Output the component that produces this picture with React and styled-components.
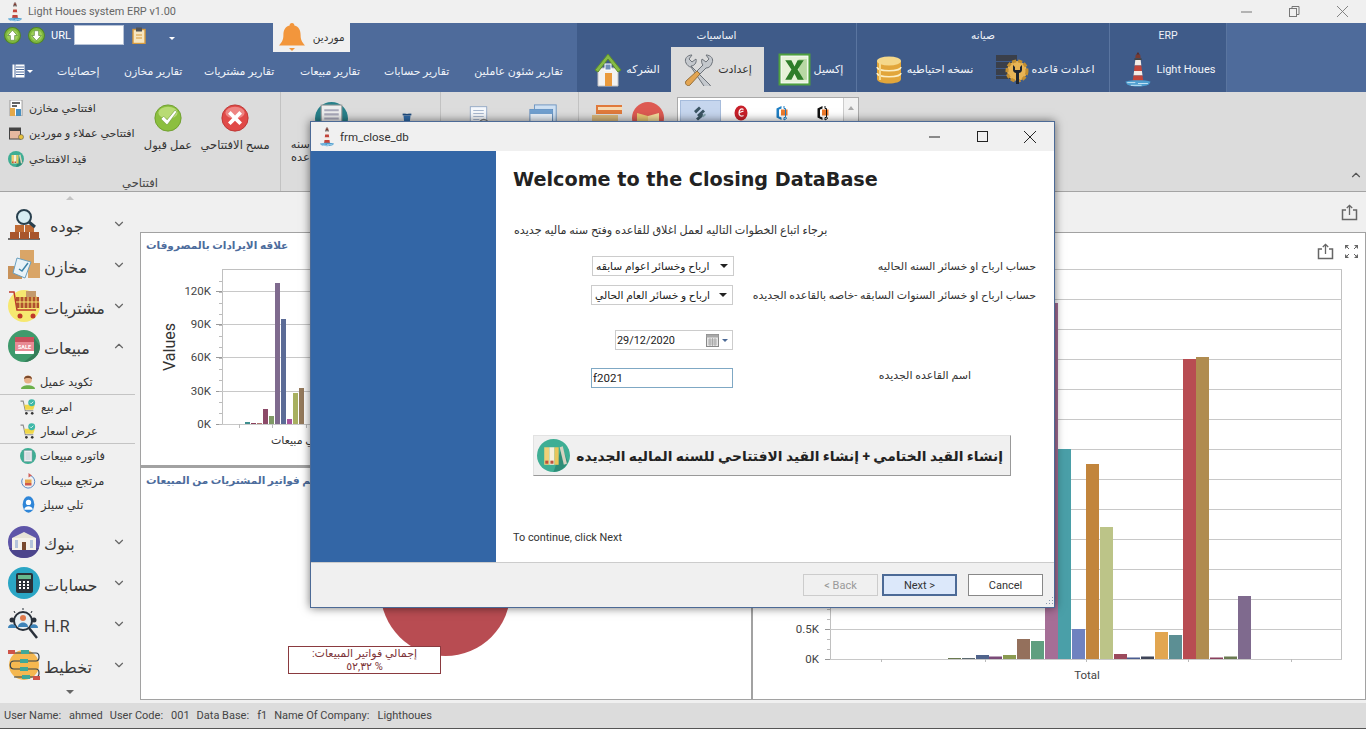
import React from "react";
import styled, { createGlobalStyle } from "styled-components";
import { ChevronDown, ChevronUp } from "lucide-react";

const GlobalStyle = createGlobalStyle`
  html, body { margin: 0; padding: 0; background: #f0f0f0; }
  * { box-sizing: border-box; }
  body { font-family: Roboto, "DejaVu Sans", sans-serif; }
`;

const Page = styled.div`
  position: relative;
  width: 1366px;
  height: 729px;
  overflow: hidden;
  display: flex;
  flex-direction: column;
  background: #f0f0f0;
`;

/* ---------- title bar ---------- */
const TitleBar = styled.div`
  height: 23px;
  display: flex;
  align-items: center;
  padding-left: 8px;
  gap: 6px;
  background: #f0f0f0;
`;
const AppName = styled.span`
  font-size: 10.9px;
  color: #666;
  flex: 1;
`;
const WinControls = styled.div`
  display: flex;
  align-items: center;
  color: ${p => p.$color || "#777"};
  width: 143px;
  justify-content: space-between;
  padding: 0 18px;
`;

/* ---------- blue header ---------- */
const Header = styled.div`
  height: 69px;
  display: flex;
  background: #4e6b9b;
  color: #fff;
`;
const HeaderLeft = styled.div`
  width: 577px;
  display: flex;
  flex-direction: column;
`;
const QuickBar = styled.div`
  height: 35px;
  display: flex;
  align-items: flex-start;
  padding-left: 4px;
`;
const QuickBall = styled.div`
  width: 17px;
  height: 17px;
  margin: 4px 7px 0 0;
`;
const UrlLabel = styled.span`
  font-size: 11px;
  margin: 6px 3px 0 -1px;
`;
const UrlInput = styled.input`
  width: 50px;
  height: 20px;
  margin-top: 2px;
  border: 1px solid #b8c4d8;
  background: #fff;
  outline: none;
`;
const QuickClip = styled.div`
  margin: 4px 0 0 8px;
  width: 14px;
  height: 16px;
`;
const Caret = styled.span`
  width: 0;
  height: 0;
  border-left: 3px solid transparent;
  border-right: 3px solid transparent;
  border-top: 3px solid ${p => p.$color || "#fff"};
  margin: ${p => p.$margin || "0"};
`;
const BellBox = styled.div`
  width: 77px;
  height: 29px;
  margin-left: 98px;
  background: #f0f0f0;
  color: #333;
  display: flex;
  align-items: center;
  gap: 8px;
  padding-left: 6px;
  font-size: 10.5px;
`;
const TabsRow = styled.div`
  height: 34px;
  display: flex;
  align-items: center;
  padding: 0 0 8px 12px;
`;
const MenuGlyph = styled.div`
  display: flex;
  align-items: center;
  gap: 2px;
  flex: none;
  margin-right: ${p => p.$gap}px;
`;
const TopTab = styled.span`
  flex: none;
  font-size: 10.9px;
  white-space: nowrap;
  color: #f2f5fa;
  width: ${p => p.$w}px;
  margin-right: 26px;
  text-align: center;
`;
const TabGroup = styled.div`
  width: ${p => p.$w}px;
  background: #3f5b89;
  border-right: 1px solid #5a75a0;
  display: flex;
  flex-direction: column;
`;
const TabGroupTitle = styled.div`
  height: 24px;
  display: flex;
  align-items: center;
  justify-content: center;
  font-size: 10.5px;
  color: #eef2f8;
`;
const TabItems = styled.div`
  flex: 1;
  display: flex;
  padding-left: ${p => p.$pad || 0}px;
`;
const TabItem = styled.div`
  flex: none;
  width: ${p => p.$w}px;
  display: flex;
  align-items: center;
  justify-content: center;
  gap: ${p => p.$gap ?? 3}px;
  font-size: 11px;
  white-space: nowrap;
  background: ${p => (p.$active ? "#dcdcdc" : "transparent")};
  color: ${p => (p.$active ? "#333" : "#f2f5fa")};
`;

/* ---------- ribbon ---------- */
const Ribbon = styled.div`
  height: 100px;
  background: #dcdcdc;
  border-bottom: 1px solid #a4a4a4;
  display: flex;
  position: relative;
`;
const RibbonGroup = styled.div`
  width: ${p => p.$w}px;
  border-right: ${p => (p.$plain ? "none" : "1px solid #c2c2c2")};
  display: flex;
  flex-direction: column;
`;
const RibbonBody = styled.div`
  height: 84px;
  display: flex;
  padding-left: ${p => p.$pad || 0}px;
`;
const RibbonLabel = styled.div`
  text-align: center;
  font-size: 11.5px;
  color: #444;
`;
const SmallList = styled.div`
  width: 134px;
  padding: 7px 0 0 8px;
  display: flex;
  flex-direction: column;
  gap: 7.5px;
`;
const SmallItem = styled.div`
  height: 18px;
  display: flex;
  align-items: center;
  gap: 5px;
  font-size: 11px;
  color: #333;
  white-space: nowrap;
`;
const LargeBtn = styled.div`
  flex: none;
  width: ${p => p.$w}px;
  padding-top: ${p => p.$top ?? 12}px;
  display: flex;
  flex-direction: column;
  align-items: center;
  gap: ${p => p.$gap ?? 7}px;
  font-size: 11.5px;
  line-height: 13px;
  color: #333;
  white-space: nowrap;
  text-align: center;
`;
const LargeBtnCut = styled.span`
  align-self: flex-start;
  width: 21px;
  text-align: right;
`;
const Gallery = styled.div`
  width: 182px;
  height: 62px;
  margin: 5px 0 0 6px;
  background: #fff;
  border: 1px solid #aaa;
  display: flex;
  padding: 2px 0 0 2px;
`;
const GalleryTile = styled.div`
  width: 41px;
  height: 30px;
  display: flex;
  justify-content: center;
  padding-top: 4px;
  background: ${p => (p.$on ? "#c6d6ee" : "transparent")};
  border: 1px solid ${p => (p.$on ? "#a6bcdc" : "transparent")};
`;
const GalleryScroll = styled.div`
  width: 15px;
  margin-left: auto;
  margin-top: -2px;
  height: 60px;
  background: #f2f2f2;
  border-left: 1px solid #ccc;
  display: flex;
  justify-content: center;
  padding-top: 8px;
`;
const GalleryArrow = styled.span`
  width: 0;
  height: 0;
  border-left: 3px solid transparent;
  border-right: 3px solid transparent;
  border-bottom: 4px solid #aaa;
`;
const RibbonCollapse = styled.div`
  position: absolute;
  right: 3px;
  bottom: 5px;
  color: #555;
`;

/* ---------- work area ---------- */
const Work = styled.div`
  height: 511px;
  display: flex;
`;
const Sidebar = styled.nav`
  width: 140px;
  display: flex;
  flex-direction: column;
  background: #f0f0f0;
`;
const ScrollMark = styled.div`
  height: ${p => p.$h}px;
  display: flex;
  justify-content: center;
  align-items: center;
`;
const ScrollArrow = styled.span`
  width: 0;
  height: 0;
  border-left: 4px solid transparent;
  border-right: 4px solid transparent;
  ${p => (p.$down ? "border-top: 4px solid #666;" : "border-bottom: 4px solid #c4c4c4;")}
`;
const NavRow = styled.div`
  height: 40.7px;
  display: flex;
  align-items: center;
  padding-left: 8px;
  color: #3a3a3a;
`;
const NavIconBox = styled.div`
  width: 32px;
  height: 32px;
  flex: none;
`;
const NavText = styled.span`
  width: 72px;
  padding: 5px 0 0 ${p => p.$indent || 4}px;
  white-space: nowrap;
  font-size: 16px;
`;
const NavChevron = styled.div`
  color: #666;
  display: flex;
`;
const SubList = styled.div`
  display: flex;
  flex-direction: column;
  padding-top: 4px;
  margin-bottom: 5px;
`;
const SubRow = styled.div`
  height: 24.4px;
  display: flex;
  align-items: center;
  gap: 4px;
  padding-left: 20px;
  width: 135px;
  font-size: 11.4px;
  color: #333;
  border-bottom: ${p => (p.$line ? "1px solid #c4c4c4" : "none")};
`;

const Content = styled.div`
  flex: 1;
  display: flex;
  flex-direction: column;
`;
const TopStrip = styled.div`
  height: 40px;
  display: flex;
  justify-content: flex-end;
  align-items: center;
  padding-right: 8px;
`;
const Panels = styled.div`
  height: 468px;
  display: flex;
`;
const LeftStack = styled.div`
  width: 612px;
  display: flex;
  flex-direction: column;
`;
const Panel = styled.section`
  position: relative;
  flex: ${p => p.$flex || 1};
  height: ${p => (p.$h ? p.$h + "px" : "auto")};
  background: #fff;
  border: 1px solid #a2a2a2;
  border-top-width: ${p => p.$tw || 1}px;
  overflow: hidden;
`;
const ChartTitle = styled.h3`
  height: 26px;
  margin: 0;
  padding: 5px 0 0 5px;
  font-size: 10.5px;
  font-weight: 700;
  line-height: 16px;
  color: #4d6c9c;
  white-space: nowrap;
`;
const PanelTools = styled.div`
  height: 36px;
  display: flex;
  justify-content: flex-end;
  align-items: center;
  gap: 10px;
  padding-right: 6px;
`;
const ChartSvg = styled.svg`
  display: block;
`;
const PieTip = styled.div`
  position: absolute;
  left: 147px;
  top: 178px;
  width: 153px;
  height: 28px;
  border: 1px solid #8a3a3f;
  background: #fff;
  color: #7d3438;
  font-size: 11px;
  line-height: 13px;
  text-align: center;
`;
const TipLine = styled.div`
  direction: ${p => p.$dir};
`;

const StatusBar = styled.footer`
  height: 26px;
  background: #dcdcdc;
  border-bottom: 1px solid #555;
  display: flex;
  align-items: center;
  padding-left: 4px;
  gap: 7px;
  font-size: 11px;
  color: #444;
  white-space: nowrap;
`;
const StatusPair = styled.span`
  display: inline-flex;
  gap: 8px;
`;

/* ---------- dialog ---------- */
const Dialog = styled.div`
  position: absolute;
  left: 310px;
  top: 121px;
  width: 745px;
  height: 487px;
  display: flex;
  flex-direction: column;
  background: #fff;
  border: 1px solid #4c6a96;
  box-shadow: 0 0 9px rgba(0, 0, 0, 0.55);
`;
const DialogTitle = styled.div`
  height: 29px;
  flex: none;
  background: #f0f0f0;
  display: flex;
  align-items: center;
  padding-left: 9px;
  gap: 6px;
  font-size: 11.5px;
  color: #333;
`;
const DialogName = styled.span`
  flex: 1;
`;
const DialogBody = styled.div`
  flex: 1;
  display: flex;
`;
const BlueSide = styled.div`
  width: 185px;
  background: #3366a6;
`;
const WizardPage = styled.div`
  flex: 1;
  display: flex;
  flex-direction: column;
  background: #fff;
`;
const WizardHeading = styled.h1`
  margin: 16px 0 0 17px;
  font-family: "DejaVu Sans", sans-serif;
  font-size: 19.2px;
  line-height: 26px;
  font-weight: 700;
  color: #222;
  white-space: nowrap;
`;
const Intro = styled.p`
  margin: 30px 0 0 18px;
  height: 16px;
  font-size: 11.2px;
  line-height: 16px;
  color: #333;
  white-space: nowrap;
`;
const FormRow = styled.div`
  display: flex;
  align-items: center;
  height: 20px;
  margin-top: ${p => p.$top}px;
  padding-left: ${p => p.$pad || 95}px;
`;
const FormLabel = styled.label`
  flex: 1;
  text-align: right;
  padding-right: ${p => p.$right || 18}px;
  padding-bottom: ${p => p.$lift || 0}px;
  font-size: 11px;
  color: #333;
  white-space: nowrap;
`;
const FakeSelect = styled.div`
  width: 142px;
  height: 20px;
  border: 1px solid #ccc;
  background: #fff;
  display: flex;
  align-items: center;
  justify-content: space-between;
  padding: 0 5px 0 3px;
  font-size: 10.7px;
  color: #222;
  white-space: nowrap;
  overflow: hidden;
`;
const SelectCaret = styled.span`
  flex: none;
  width: 0;
  height: 0;
  border-left: 4px solid transparent;
  border-right: 4px solid transparent;
  border-top: 4px solid #222;
`;
const DateField = styled.div`
  width: 118px;
  height: 20px;
  margin-left: 24px;
  border: 1px solid #ccc;
  display: flex;
  align-items: center;
  padding: 0 4px 0 1px;
  font-size: 10.9px;
  color: #222;
`;
const DateText = styled.span`
  flex: 1;
`;
const NameInput = styled.input`
  width: 142px;
  height: 20px;
  border: 1px solid #7fa8c4;
  padding: 0 1px;
  outline: none;
  font-family: Roboto, sans-serif;
  font-size: 11.5px;
  color: #222;
`;
const ActionBtn = styled.button`
  margin: 47px 0 0 37px;
  width: 478px;
  height: 41px;
  display: flex;
  align-items: center;
  justify-content: space-between;
  padding: 0 7px 0 3px;
  background: #f0f0f0;
  border: 1px solid #e2e2e2;
  border-right-color: #999;
  border-bottom-color: #999;
  font-family: Roboto, "DejaVu Sans", sans-serif;
  font-size: 13.8px;
  font-weight: 700;
  color: #222;
  white-space: nowrap;
`;
const NextHint = styled.div`
  margin: 54px 0 0 17px;
  font-size: 10.9px;
  line-height: 16px;
  color: #333;
`;
const DialogFooter = styled.div`
  height: 45px;
  flex: none;
  position: relative;
  background: #f0f0f0;
  border-top: 1px solid #ccc;
  display: flex;
  justify-content: flex-end;
  align-items: flex-start;
  padding: 11px 11px 0 0;
`;
const WizBtn = styled.button`
  width: 75px;
  height: 22px;
  margin-left: ${p => p.$gap || 0}px;
  padding: 0;
  font-family: Roboto, sans-serif;
  font-size: 11px;
  background: ${p => (p.$primary ? "#dce8fa" : p.$off ? "#f0f0f0" : "#fff")};
  color: ${p => (p.$off ? "#999" : "#333")};
  border: ${p => (p.$primary ? "2px solid #4c6a96" : p.$off ? "1px solid #ccc" : "1px solid #888")};
`;
const Grip = styled.svg`
  position: absolute;
  right: 0;
  bottom: 0;
`;

/* ---------- drawings ---------- */
const Svg = ({ s = 32, w, h, vb = "0 0 32 32", children }) => (
  <svg width={w || s} height={h || s} viewBox={vb} xmlns="http://www.w3.org/2000/svg" style={{ display: "block", flex: "none" }}>
    {children}
  </svg>
);

const Lighthouse = ({ w = 14, h = 20 }) => (
  <Svg w={w} h={h} vb="0 0 28 40">
    <path d="M14 0l2 3h-4z" fill="#5c2a24" />
    <path d="M11.500 3h5l.5 4h-6z" fill="#7a3a30" />
    <path d="M10 7h8v2h-8z" fill="#444" />
    <path d="M11 9h6l.7 6h-7.400z" fill="#f4ece6" />
    <path d="M10.300 15h7.400l.7 6h-8.800z" fill="#c2453b" />
    <path d="M9.600 21h8.800l.6 5H9z" fill="#f4ece6" />
    <path d="M9 26h10l.8 6H8.200z" fill="#c2453b" />
    <path d="M0 33c6-2 22-2 28 0l-2 3c-6 3-18 3-24 0z" fill="#4f9fd0" />
    <path d="M2 34h9M14 35h11M6 37h12" stroke="#cfeaf8" strokeWidth="1" />
  </Svg>
);
const ArrowBall = ({ down }) => (
  <Svg s={17}>
    <circle cx="16" cy="16" r="15" fill="#7fb83e" stroke="#4f8526" strokeWidth="2" />
    <circle cx="16" cy="16" r="10.500" fill="#9ed05a" />
    <path d={down ? "M16 26 7 16h5V7h8v9h5z" : "M16 6l9 10h-5v9h-8v-9H7z"} fill="#fff" stroke="#3d6c1e" strokeWidth="1" />
  </Svg>
);
const ClipIcon = () => (
  <Svg w={14} h={17} vb="0 0 14 17">
    <rect x="1" y="2.500" width="12" height="14" fill="#f7e6c0" stroke="#d89a3c" strokeWidth="1.400" />
    <rect x="4" y="0.500" width="6" height="4" fill="#555" />
    <path d="M4 8h6M4 11h6" stroke="#d89a3c" />
  </Svg>
);
const BellIcon = () => (
  <Svg w={26} h={29} vb="0 0 26 29">
    <path d="M13 0c1.600 0 2.400 1.200 2.400 2.600 4.600 1.200 6.200 5 6.200 9.400 0 5 1.400 7 4.400 10.400H0C3 19 4.400 17 4.400 12c0-4.400 1.600-8.200 6.200-9.400C10.600 1.200 11.400 0 13 0z" fill="#f2963c" />
    <path d="M10 25h6l-3 3z" fill="#f2963c" />
  </Svg>
);
const HamburgerIcon = () => (
  <Svg w={13} h={14} vb="0 0 13 14">
    <rect x="0.500" y="0.500" width="12" height="13" fill="#fff" />
    <path d="M4 3h8M4 5.500h8M4 8h8M4 10.500h8" stroke="#4e6b9b" />
    <path d="M3 0v14" stroke="#4e6b9b" />
  </Svg>
);
const HomeIcon = () => (
  <Svg w={30} h={34} vb="0 0 30 34">
    <path d="M5 15h20v18H5z" fill="#f2f2f2" stroke="#c4c4c4" />
    <path d="M15 1 2 17l3 2L15 6l10 13 3-2z" fill="#86bb45" stroke="#5d8c2a" />
    <rect x="12" y="20" width="7" height="13" fill="#ea9a3c" />
    <rect x="12" y="11" width="6" height="6" fill="#6f8fb8" stroke="#fff" />
  </Svg>
);
const ToolsIcon = () => (
  <Svg w={32} h={32}>
    <path d="M3 9c-2-4 1-8 6-8l-3 4 3 3 4-3c1 4-2 7-5 7l19 19c2 3-2 6-4 4L8 13C6 13 4 11 3 9z" fill="#c4c8cd" stroke="#6d737a" />
    <path d="M29 9c2-4-1-8-6-8l3 4-3 3-4-3c-1 3 0 5 1 6L14 17l3 3 6-6c3 0 5-2 6-5z" fill="#c4c8cd" stroke="#6d737a" />
    <path d="M14 17 3 27c-2 3 2 6 4 4l10-11z" fill="#e3a552" stroke="#96703a" />
  </Svg>
);
const ExcelIcon = () => (
  <Svg w={33} h={33}>
    <rect x="0.500" y="0.500" width="31" height="31" fill="#4fa03f" />
    <rect x="3" y="3" width="26" height="26" fill="#e6f2d8" stroke="#fff" />
    <path d="M20 6h8v20h-8z" fill="#b8d8a4" />
    <path d="M7 7h6l3 6 3-6h6l-6 9 6 10h-6l-3-6-3 6H7l6-10z" fill="#2e7d2a" />
  </Svg>
);
const DbIcon = () => (
  <Svg w={26} h={28} vb="0 0 26 28">
    <path d="M1 5v18c0 6 24 6 24 0V5z" fill="#e2a63a" />
    <ellipse cx="13" cy="5" rx="12" ry="4.500" fill="#f5d88a" />
    <path d="M1 11c0 5 24 5 24 0M1 17c0 5 24 5 24 0" stroke="#fbeec4" strokeWidth="1.500" fill="none" />
    <path d="M4 6v18" stroke="#f7d98c" strokeWidth="2" />
  </Svg>
);
const ServerGearIcon = () => (
  <Svg w={34} h={32} vb="0 0 34 32">
    <rect x="0" y="1" width="21" height="6" fill="#3a3f4a" />
    <rect x="0" y="8" width="21" height="6" fill="#3a3f4a" />
    <rect x="0" y="15" width="21" height="6" fill="#3a3f4a" />
    <rect x="0" y="22" width="17" height="3" fill="#3a3f4a" />
    <circle cx="21" cy="17" r="10" fill="#e8b455" stroke="#c48f30" strokeWidth="3" strokeDasharray="4 2" />
    <path d="M17 11v5c0 2 2 3 3 3v11h3V19c1 0 3-1 3-3v-5l-2 2v3h-5v-3z" fill="#1f2530" />
  </Svg>
);
const OkBall = () => (
  <Svg s={28}>
    <circle cx="16" cy="16" r="15" fill="#8cbf3f" stroke="#6c9c2a" />
    <ellipse cx="16" cy="10" rx="11" ry="7" fill="#b8db74" />
    <path d="M8 17l3-3 4 4 9-11 2 2-11 15z" fill="#fff" stroke="#5d8c2a" strokeWidth=".6" />
  </Svg>
);
const CancelBall = () => (
  <Svg s={28}>
    <circle cx="16" cy="16" r="15" fill="#e04a48" stroke="#b93230" />
    <ellipse cx="16" cy="10" rx="11" ry="7" fill="#ee8583" />
    <path d="M11 8l5 5 5-5 3 3-5 5 5 5-3 3-5-5-5 5-3-3 5-5-5-5z" fill="#fff" />
  </Svg>
);
const StoreDoc = () => (
  <Svg s={16}>
    <rect x="4" y="0" width="24" height="32" fill="#fff" stroke="#555" />
    <path d="M8 6h16M8 12h10" stroke="#333" strokeWidth="3" />
    <rect x="4" y="16" width="10" height="16" fill="#e4a94a" />
    <rect x="16" y="18" width="10" height="14" fill="#4a90c0" />
  </Svg>
);
const ClientsIcon = () => (
  <Svg s={16}>
    <rect x="3" y="4" width="22" height="22" fill="#e6b9a0" stroke="#444" strokeWidth="2" />
    <rect x="3" y="4" width="22" height="6" fill="#444" />
    <circle cx="26" cy="22" r="5" fill="#e8c23c" stroke="#444" />
  </Svg>
);
const BooksBall = ({ s = 16 }) => (
  <Svg s={s}>
    <circle cx="16" cy="16" r="16" fill="#3fae94" />
    <path d="M16 32 24 8l6 14a16 16 0 0 1-14 10z" fill="#2f8d78" />
    <rect x="7" y="8" width="5" height="17" fill="#f0d078" />
    <rect x="12" y="8" width="5" height="17" fill="#f7f0dc" />
    <rect x="17" y="8" width="4" height="17" fill="#e9c65a" />
    <path d="M22 8l3-1 4 17-3 1z" fill="#d7d2c0" />
    <rect x="8" y="21" width="3" height="3" fill="#c0503c" />
    <rect x="13" y="21" width="3" height="3" fill="#c0503c" />
  </Svg>
);
const ScreenBall = () => (
  <Svg s={33}>
    <circle cx="16" cy="16" r="16" fill="#27808a" />
    <rect x="6" y="3" width="20" height="22" fill="#eee" stroke="#999" />
    <path d="M9 8h14M9 12h14M9 16h14" stroke="#aab" strokeWidth="2" />
  </Svg>
);
const TrashIcon = () => (
  <Svg s={14}>
    <path d="M8 10h16l-2 20H10z" fill="#2f6aa8" />
    <rect x="6" y="6" width="20" height="4" fill="#1e4a7c" />
    <path d="M13 3h6v3h-6z" fill="#e0e0e0" />
  </Svg>
);
const DocSearch = () => (
  <Svg w={24} h={30}>
    <rect x="3" y="1" width="22" height="26" fill="#f6f9fd" stroke="#7f99bd" />
    <path d="M7 6h14M7 10h14M7 14h14M7 18h8" stroke="#8ea2bf" />
    <circle cx="21" cy="24" r="6" fill="none" stroke="#7d7d7d" strokeWidth="2" />
  </Svg>
);
const WindowsIcon = () => (
  <Svg s={29}>
    <rect x="6" y="1" width="24" height="20" fill="#cfe0f2" stroke="#6b93bf" />
    <rect x="1" y="6" width="25" height="20" fill="#eaf2fa" stroke="#5d88b8" />
    <rect x="1" y="6" width="25" height="5" fill="#6f9fcf" />
    <circle cx="20" cy="29" r="8" fill="#a98a5e" />
  </Svg>
);
const BookStack = () => (
  <Svg s={32}>
    <rect x="5" y="2" width="26" height="9" fill="#e07a3c" />
    <rect x="7" y="4" width="24" height="3" fill="#f7dcb4" />
    <rect x="1" y="12" width="26" height="8" fill="#d8b87c" />
    <rect x="1" y="21" width="28" height="9" fill="#3f8fa0" />
  </Svg>
);
const RedBook = () => (
  <Svg s={32}>
    <circle cx="16" cy="16" r="16" fill="#dd5a52" />
    <path d="M5 11l11 3v14L5 24z" fill="#e9c873" />
    <path d="M27 11l-11 3v14l11-4z" fill="#f4dc9c" />
  </Svg>
);
const GalleryA = () => (
  <Svg s={16}>
    <path d="M4 12 14 3l4 4L8 17zM10 20 22 9l4 4-12 11zM8 27l12-10 4 4-12 10z" fill="#3b5564" />
    <path d="M20 22l6-5 2 3-6 5z" fill="#85a8b0" />
  </Svg>
);
const GalleryB = () => (
  <Svg s={16}>
    <ellipse cx="16" cy="16" rx="13" ry="15" fill="#c8202a" />
    <path d="M21 9c-5-3-9 1-9 7 0 5 4 8 9 5M13 15l8-3" stroke="#fff" strokeWidth="2.500" fill="none" />
  </Svg>
);
const GalleryC = ({ c }) => (
  <Svg s={16}>
    <path d="M15 2 5 7v18l10 5V25l-5-2V9l5-2z" fill={c} />
    <rect x="14" y="9" width="13" height="12" fill="#ee7a2c" />
    <path d="M20 2v5h3v18h-3v5l5-3v-2" stroke={c} strokeWidth="2" fill="none" />
  </Svg>
);

const QualityIcon = () => (
  <Svg>
    <path d="M0 31h32" stroke="#444" strokeWidth="1.500" />
    <rect x="2" y="24" width="9" height="7" fill="#a8552c" />
    <rect x="12" y="24" width="9" height="7" fill="#a8552c" />
    <rect x="22" y="24" width="9" height="7" fill="#a8552c" />
    <rect x="7" y="17" width="9" height="7" fill="#bf6a34" />
    <rect x="17" y="17" width="9" height="7" fill="#bf6a34" />
    <circle cx="16" cy="9" r="7" fill="#d8eef4" stroke="#29404e" strokeWidth="2" />
    <path d="M21 14l6 5" stroke="#29404e" strokeWidth="3" />
  </Svg>
);
const StoreIcon = () => (
  <Svg>
    <rect x="12" y="1" width="14" height="13" fill="#d9a567" />
    <rect x="0" y="17" width="14" height="13" fill="#c8925a" />
    <rect x="20" y="14" width="12" height="15" fill="#d9a567" />
    <path d="M9 9l14 4-6 16-12-5z" fill="#e9f3f8" stroke="#6aa0c0" />
    <path d="M11 20l3 2 6-8" stroke="#3d83a8" strokeWidth="1.500" fill="none" />
  </Svg>
);
const CartIcon = () => (
  <Svg>
    <circle cx="16" cy="16" r="16" fill="#f6e870" />
    <path d="M1 2h5l3 18h19" stroke="#c0392b" strokeWidth="1.500" fill="none" />
    <rect x="8" y="7" width="23" height="11" fill="#b0512e" />
    <path d="M12 7v11M16 7v11M20 7v11M24 7v11M28 7v11M8 12h23" stroke="#f6e870" />
    <rect x="18" y="1" width="10" height="6" fill="#c49a6c" />
    <circle cx="12" cy="26" r="2.500" fill="#c0392b" />
    <circle cx="25" cy="26" r="2.500" fill="#c0392b" />
  </Svg>
);
const SaleIcon = () => (
  <Svg>
    <circle cx="16" cy="16" r="16" fill="#3f9a6c" />
    <path d="M16 32 26 24V8l6 8a16 16 0 0 1-16 16z" fill="#357f5a" />
    <rect x="7" y="7" width="19" height="17" rx="1" fill="#fff" />
    <rect x="7" y="7" width="19" height="5" fill="#c8505c" />
    <rect x="7" y="12" width="19" height="9" fill="#e88a94" />
    <text x="16.500" y="19" fontSize="5.500" fontWeight="700" textAnchor="middle" fill="#fff">SALE</text>
  </Svg>
);
const BankIcon = () => (
  <Svg>
    <circle cx="16" cy="16" r="16" fill="#5e55a8" />
    <path d="M16 32C8 32 3 28 1 22h30c-2 6-7 10-15 10z" fill="#4c458c" />
    <path d="M4 12l12-6 12 6z" fill="#e8e4d8" />
    <rect x="4" y="12" width="24" height="12" fill="#f5f2ea" />
    <rect x="14" y="16" width="4" height="8" fill="#7a4a2c" />
    <path d="M7 14h3v8H7zM22 14h3v8h-3z" fill="#b5c4dc" />
  </Svg>
);
const CalcIcon = () => (
  <Svg>
    <circle cx="16" cy="16" r="16" fill="#2aa5c4" />
    <rect x="8" y="6" width="17" height="20" rx="2" fill="#2a3038" />
    <rect x="10" y="8" width="13" height="4" fill="#68b88e" />
    <path d="M11 15h2M15 15h2M19 15h2M11 18h2M15 18h2M19 18h2M11 21h2M15 21h2M19 21h2" stroke="#fff" strokeWidth="1.800" />
  </Svg>
);
const HrIcon = () => (
  <Svg>
    <circle cx="15" cy="13" r="9" fill="#e6eef2" stroke="#29303a" strokeWidth="2" />
    <circle cx="15" cy="10" r="3" fill="#e07a4c" />
    <path d="M10 19c0-6 10-6 10 0z" fill="#3d83b8" />
    <circle cx="4" cy="12" r="2.500" fill="#29303a" />
    <path d="M0 20c0-5 8-5 8 0z" fill="#3d83b8" />
    <circle cx="26" cy="12" r="2.500" fill="#29303a" />
    <path d="M22 20c0-5 8-5 8 0z" fill="#3d83b8" />
    <path d="M21 20l8 10" stroke="#29303a" strokeWidth="2.500" />
    <path d="M15 0v2M6 3l1 2M24 3l-1 2" stroke="#29303a" />
  </Svg>
);
const PlanIcon = () => (
  <Svg>
    <circle cx="16" cy="16" r="15" fill="#f5b850" />
    <path d="M6 4h22c4 0 4 8 0 8H6c-5 0-5 8 0 8h22c4 0 4 8 0 8H6" fill="none" stroke="#33404c" strokeWidth="1.200" />
    <rect x="0" y="1" width="7" height="4" fill="#cf5448" />
    <rect x="13" y="1" width="8" height="4" fill="#3fa898" />
    <rect x="12" y="10" width="8" height="4" fill="#3fa898" />
    <rect x="12" y="18" width="8" height="4" fill="#3fa898" />
    <rect x="14" y="26" width="8" height="4" fill="#3fa898" />
    <rect x="25" y="27" width="7" height="4" fill="#cf5448" />
  </Svg>
);
const PersonIcon = () => (
  <Svg s={16}>
    <path d="M2 30c0-10 28-10 28 0z" fill="#6bb04c" />
    <circle cx="16" cy="11" r="8" fill="#e6b088" />
    <path d="M8 10c0-9 16-9 16 0-4-3-12-3-16 0z" fill="#7a4a2c" />
  </Svg>
);
const CheckCart = () => (
  <Svg s={17}>
    <path d="M1 4h5l4 18h15" stroke="#8a8a8a" strokeWidth="2" fill="none" />
    <path d="M8 11h20l-3 9H10z" fill="#f0d84a" />
    <circle cx="12" cy="27" r="2.500" fill="#333" />
    <circle cx="23" cy="27" r="2.500" fill="#333" />
    <circle cx="22" cy="7" r="6.500" fill="#3fb8a8" />
    <path d="M19 7l2 2 4-4" stroke="#fff" strokeWidth="1.500" fill="none" />
  </Svg>
);
const InvoiceBall = () => (
  <Svg s={16}>
    <circle cx="16" cy="16" r="16" fill="#3fae94" />
    <rect x="8" y="5" width="16" height="22" fill="#eceff2" stroke="#8a98a4" />
    <path d="M11 10h10M11 14h10M11 18h10M11 22h10" stroke="#9aa6b0" />
  </Svg>
);
const ReturnIcon = () => (
  <Svg s={16}>
    <path d="M5 11A13 13 0 1 0 21 5" stroke="#5a8ac8" strokeWidth="2" fill="none" />
    <path d="M17 0l7 5-7 4z" fill="#d0605a" />
    <rect x="10" y="13" width="13" height="7" fill="#e8a84c" />
    <rect x="10" y="20" width="13" height="5" fill="#d05a4c" />
  </Svg>
);
const TeleIcon = () => (
  <Svg s={17}>
    <ellipse cx="16" cy="16" rx="11" ry="15.500" fill="#2f86d8" />
    <circle cx="16" cy="12" r="5" fill="#fff" />
    <path d="M8 26c0-9 16-9 16 0z" fill="#fff" />
  </Svg>
);
const ShareIcon = () => (
  <Svg s={17} vb="0 0 17 17">
    <path d="M5 6H1.500v9.500h14V6H12" fill="none" stroke="#666" strokeWidth="1.500" />
    <path d="M8.500 11V1.500M5.800 4l2.700-2.700L11.200 4" fill="none" stroke="#666" strokeWidth="1.300" />
  </Svg>
);
const ExpandIcon = () => (
  <Svg s={15} vb="0 0 15 15">
    <path d="M1 1h4L1 5zM14 1h-4l4 4zM1 14h4l-4-4zM14 14h-4l4-4z" fill="#666" />
    <path d="M2 2l3 3M13 2l-3 3M2 13l3-3M13 13l-3-3" stroke="#666" />
  </Svg>
);
const CalendarGlyph = () => (
  <Svg s={13} vb="0 0 13 13">
    <rect x="0.500" y="0.500" width="12" height="12" fill="#e6e6e6" stroke="#888" />
    <rect x="0.500" y="0.500" width="12" height="3" fill="#a8a8a8" />
    <path d="M2 6h9M2 8h9M2 10h9M4 4v8M6.500 4v8M9 4v8" stroke="#999" strokeWidth=".7" />
  </Svg>
);
const WinMin = () => (
  <Svg w={11} h={11} vb="0 0 11 11"><path d="M0 6h11" stroke="currentColor" strokeWidth="1" /></Svg>
);
const WinMax = () => (
  <Svg s={11} vb="0 0 11 11"><rect x="0.500" y="0.500" width="10" height="10" fill="none" stroke="currentColor" /></Svg>
);
const WinRestore = () => (
  <Svg s={11} vb="0 0 11 11">
    <rect x="0.500" y="2.500" width="7" height="8" fill="none" stroke="currentColor" />
    <path d="M3 2.500V.5h7v8H7.500" fill="none" stroke="currentColor" />
  </Svg>
);
const WinClose = ({ s = 11 }) => (
  <Svg s={s} vb="0 0 11 11"><path d="M0 0l11 11M11 0 0 11" stroke="currentColor" strokeWidth=".9" /></Svg>
);

/* ---------- chart data ---------- */
const smallBars = [
  [245, 2, "#3f8f8f"], [251, 1, "#8a3f5c"], [257, 1, "#b0726c"], [263, 15, "#8c4a68"], [269, 8, "#7f9a66"],
  [275, 141, "#7f6a8e"], [281, 105, "#5b6b96"], [287, 5, "#a8559c"], [293, 31, "#a8b060"], [299, 36, "#957a5c"],
];
const bigBars = [
  [948, 1, "#6a7a50"], [962, 1, "#5c6a70"], [976, 4, "#50648c"], [989, 2.500, "#7a4a78"], [1003, 4, "#8a9a50"],
  [1017, 20, "#94705c"], [1031, 18, "#5f9f80"], [1045, 356, "#a56e96"], [1058, 210, "#4a9fa8"], [1072, 30, "#6f82c0"],
  [1086, 195, "#c2853c"], [1100, 132, "#bcc488"], [1114, 5, "#9c4a5c"], [1127, 1.500, "#4a5c90"], [1141, 2.500, "#3e4458"],
  [1155, 27, "#e2a650"], [1169, 24, "#5c8f94"], [1183, 300, "#b84c52"], [1196, 302, "#b08c50"], [1210, 1.500, "#8a3f5c"],
  [1224, 2.500, "#6a7a50"], [1238, 63, "#7f6a8e"],
];

const range = (from, to, step) => {
  const out = [];
  for (let v = from; v <= to; v += step) out.push(v);
  return out;
};

function RevenueChart() {
  const ticks = [[424, "0K"], [391, "30K"], [357, "60K"], [324, "90K"], [291, "120K"]];
  return (
    <ChartSvg width="610" height="207" viewBox="141 259 610 207">
      <rect x="222.500" y="269.500" width="520" height="155" fill="#fff" stroke="#c0c0c0" />
      {ticks.map(([y, label]) => (
        <g key={label}>
          <path d={`M222 ${y + 0.5}H740`} stroke="#c8c8c8" />
          <path d={`M216 ${y + 0.5}h6`} stroke="#999" />
          <text x="211" y={y + 4} textAnchor="end" fontSize="11.500" fill="#444">{label}</text>
        </g>
      ))}
      {range(280, 424, 11).map(y => <path key={y} d={`M219 ${424 - (y - 280) + 0.5}h3`} stroke="#bbb" />)}
      {[239, 272, 306].map(x => <path key={x} d={`M${x + 0.5} 424v4`} stroke="#bbb" />)}
      {smallBars.map(([x, h, c]) => <rect key={x} x={x} y={424 - h} width="5" height={h} fill={c} />)}
      <text transform="translate(175 347) rotate(-90)" textAnchor="middle" fontSize="16" fill="#333">Values</text>
      <text x="271" y="444" textAnchor="start" fontSize="11" fill="#333">اجمالي مبيعات</text>
    </ChartSvg>
  );
}

function PieChart() {
  return (
    <ChartSvg width="610" height="206" viewBox="141 493 610 206">
      <circle cx="445.500" cy="590" r="65" fill="#b84c52" />
    </ChartSvg>
  );
}

function TotalChart() {
  const lines = range(269, 659, 30);
  return (
    <ChartSvg width="610" height="431" viewBox="753 269 610 431">
      <rect x="830.500" y="269.500" width="511" height="390" fill="#fff" stroke="#c0c0c0" />
      {lines.map(y => <path key={y} d={`M830 ${y + 0.5}H1342`} stroke="#c8c8c8" />)}
      {[[659, "0K"], [629, "0.5K"], [599, "1K"]].map(([y, label]) => (
        <g key={label}>
          <path d={`M825 ${y + 0.5}h5`} stroke="#999" />
          <text x="819" y={y + 4} textAnchor="end" fontSize="11.500" fill="#444">{label}</text>
        </g>
      ))}
      {[649, 639, 619, 609].map(y => <path key={y} d={`M827 ${y + 0.5}h3`} stroke="#bbb" />)}
      {[881, 985, 1086, 1188, 1291].map(x => <path key={x} d={`M${x + 0.5} 659v3`} stroke="#bbb" />)}
      {bigBars.map(([x, h, c]) => <rect key={x} x={x} y={659 - h} width="13" height={h} fill={c} />)}
      <text x="1087" y="679" textAnchor="middle" fontSize="11.500" fill="#444">Total</text>
    </ChartSvg>
  );
}

/* ---------- page data ---------- */
const topTabs = [
  ["إحصائيات", 41], ["تقارير مخازن", 54], ["تقارير مشتريات", 70], ["تقارير مبيعات", 58],
  ["تقارير حسابات", 64], ["تقارير شئون عاملين", 89],
];
const navTop = [
  [QualityIcon, "جوده", 10], [StoreIcon, "مخازن"], [CartIcon, "مشتريات"],
];
const navBottom = [
  [BankIcon, "بنوك"], [CalcIcon, "حسابات"], [HrIcon, "H.R"], [PlanIcon, "تخطيط"],
];
const subItems = [
  [PersonIcon, "تكويد عميل", true], [CheckCart, "امر بيع"], [CheckCart, "عرض اسعار", true],
  [InvoiceBall, "فاتوره مبيعات"], [ReturnIcon, "مرتجع مبيعات"], [TeleIcon, "تلي سيلز"],
];

const NavEntry = ({ icon: Icon, label, open, indent }) => (
  <NavRow>
    <NavIconBox><Icon /></NavIconBox>
    <NavText $indent={indent}>{label}</NavText>
    <NavChevron>{open ? <ChevronUp size={14} /> : <ChevronDown size={14} />}</NavChevron>
  </NavRow>
);

export default function App() {
  return (
    <Page>
      <GlobalStyle />
      <TitleBar>
        <Lighthouse />
        <AppName>Light Houes system ERP v1.00</AppName>
        <WinControls>
          <WinMin />
          <WinRestore />
          <WinClose />
        </WinControls>
      </TitleBar>

      <Header>
        <HeaderLeft>
          <QuickBar>
            <QuickBall><ArrowBall /></QuickBall>
            <QuickBall><ArrowBall down /></QuickBall>
            <UrlLabel>URL</UrlLabel>
            <UrlInput readOnly />
            <QuickClip><ClipIcon /></QuickClip>
            <Caret $margin="14px 0 0 23px" />
            <BellBox>
              <BellIcon />
              <span>موردين</span>
            </BellBox>
          </QuickBar>
          <TabsRow>
            <MenuGlyph $gap={24}>
              <HamburgerIcon />
              <Caret />
            </MenuGlyph>
            {topTabs.map(([label, w]) => <TopTab key={label} $w={w}>{label}</TopTab>)}
          </TabsRow>
        </HeaderLeft>
        <TabGroup $w={280}>
          <TabGroupTitle>اساسيات</TabGroupTitle>
          <TabItems $pad={5}>
            <TabItem $w={89}><HomeIcon /><span>الشركه</span></TabItem>
            <TabItem $w={93} $active><ToolsIcon /><span>إعدادت</span></TabItem>
            <TabItem $w={93}><ExcelIcon /><span>إكسيل</span></TabItem>
          </TabItems>
        </TabGroup>
        <TabGroup $w={253}>
          <TabGroupTitle>صيانه</TabGroupTitle>
          <TabItems $pad={10}>
            <TabItem $w={115} $gap={5}><DbIcon /><span>نسخه احتياطيه</span></TabItem>
            <TabItem $w={127} $gap={1}><ServerGearIcon /><span>اعدادت قاعده</span></TabItem>
          </TabItems>
        </TabGroup>
        <TabGroup $w={117}>
          <TabGroupTitle>ERP</TabGroupTitle>
          <TabItems>
            <TabItem $w={117}><Lighthouse w={32} h={36} /><span>Light Houes</span></TabItem>
          </TabItems>
        </TabGroup>
      </Header>

      <Ribbon>
        <RibbonGroup $w={281}>
          <RibbonBody>
            <SmallList>
              <SmallItem><StoreDoc /><span>افتتاحي مخازن</span></SmallItem>
              <SmallItem><ClientsIcon /><span>افتتاحي عملاء و موردين</span></SmallItem>
              <SmallItem><BooksBall /><span>قيد الافتتاحي</span></SmallItem>
            </SmallList>
            <LargeBtn $w={68}><OkBall /><span>عمل قبول</span></LargeBtn>
            <LargeBtn $w={66}><CancelBall /><span>مسح الافتتاحي</span></LargeBtn>
          </RibbonBody>
          <RibbonLabel>افتتاحي</RibbonLabel>
        </RibbonGroup>
        <RibbonGroup $w={160}>
          <RibbonBody $pad={8}>
            <LargeBtn $w={84} $top={10} $gap={3}><ScreenBall /><LargeBtnCut>سنه<br />عده</LargeBtnCut></LargeBtn>
            <LargeBtn $w={68} $top={19}><TrashIcon /></LargeBtn>
          </RibbonBody>
        </RibbonGroup>
        <RibbonGroup $w={138}>
          <RibbonBody $pad={14}>
            <LargeBtn $w={50} $top={11}><DocSearch /></LargeBtn>
            <LargeBtn $w={76}><WindowsIcon /></LargeBtn>
          </RibbonBody>
        </RibbonGroup>
        <RibbonGroup $w={92} $plain>
          <RibbonBody $pad={7}>
            <LargeBtn $w={41} $top={11}><BookStack /></LargeBtn>
            <LargeBtn $w={41} $top={10}><RedBook /></LargeBtn>
          </RibbonBody>
        </RibbonGroup>
        <Gallery>
          <GalleryTile $on><GalleryA /></GalleryTile>
          <GalleryTile><GalleryB /></GalleryTile>
          <GalleryTile><GalleryC c="#1f7fc4" /></GalleryTile>
          <GalleryTile><GalleryC c="#111" /></GalleryTile>
          <GalleryScroll><GalleryArrow /></GalleryScroll>
        </Gallery>
        <RibbonCollapse><ChevronUp size={14} /></RibbonCollapse>
      </Ribbon>

      <Work>
        <Sidebar>
          <ScrollMark $h={12}><ScrollArrow /></ScrollMark>
          {navTop.map(([icon, label, indent]) => <NavEntry key={label} icon={icon} label={label} indent={indent} />)}
          <NavEntry icon={SaleIcon} label="مبيعات" open />
          <SubList>
            {subItems.map(([Icon, label, line]) => (
              <SubRow key={label} $line={line}><Icon /><span>{label}</span></SubRow>
            ))}
          </SubList>
          {navBottom.map(([icon, label]) => <NavEntry key={label} icon={icon} label={label} />)}
          <ScrollMark $h={14}><ScrollArrow $down /></ScrollMark>
        </Sidebar>
        <Content>
          <TopStrip><ShareIcon /></TopStrip>
          <Panels>
            <LeftStack>
              <Panel $h={234}>
                <ChartTitle>علاقه الايرادات بالمصروفات</ChartTitle>
                <RevenueChart />
              </Panel>
              <Panel $h={234} $tw={2}>
                <ChartTitle>حجم فواتير المشتريات من المبيعات</ChartTitle>
                <PieChart />
                <PieTip>
                  <TipLine $dir="rtl">إجمالي فواتير المبيعات:</TipLine>
                  <TipLine $dir="ltr">٥٢,٣٢ %</TipLine>
                </PieTip>
              </Panel>
            </LeftStack>
            <Panel $flex={1}>
              <PanelTools>
                <ShareIcon />
                <ExpandIcon />
              </PanelTools>
              <TotalChart />
            </Panel>
          </Panels>
        </Content>
      </Work>

      <StatusBar>
        <StatusPair><span>User Name:</span><span>ahmed</span></StatusPair>
        <StatusPair><span>User Code:</span><span>001</span></StatusPair>
        <StatusPair><span>Data Base:</span><span>f1</span></StatusPair>
        <StatusPair><span>Name Of Company:</span><span>Lighthoues</span></StatusPair>
      </StatusBar>

      <Dialog>
        <DialogTitle>
          <Lighthouse />
          <DialogName>frm_close_db</DialogName>
          <WinControls $color="#222">
            <WinMin />
            <WinMax />
            <WinClose s={12} />
          </WinControls>
        </DialogTitle>
        <DialogBody>
          <BlueSide />
          <WizardPage>
            <WizardHeading>Welcome to the Closing DataBase</WizardHeading>
            <Intro>برجاء اتباع الخطوات التاليه لعمل اغلاق للقاعده وفتح سنه ماليه جديده</Intro>
            <FormRow $top={17} $pad={96}>
              <FakeSelect>
                <span>ارباح وخسائر اعوام سابقه</span>
                <SelectCaret />
              </FakeSelect>
              <FormLabel>حساب ارباح او خسائر السنه الحاليه</FormLabel>
            </FormRow>
            <FormRow $top={9}>
              <FakeSelect>
                <span>ارباح و خسائر العام الحالي</span>
                <SelectCaret />
              </FakeSelect>
              <FormLabel>حساب ارباح او خسائر السنوات السابقه -خاصه بالقاعده الجديده</FormLabel>
            </FormRow>
            <FormRow $top={25}>
              <DateField>
                <DateText>29/12/2020</DateText>
                <CalendarGlyph />
                <Caret $color="#4c6a96" $margin="0 0 0 3px" />
              </DateField>
            </FormRow>
            <FormRow $top={18}>
              <NameInput readOnly value="f2021" />
              <FormLabel $right={83} $lift={6}>اسم القاعده الجديده</FormLabel>
            </FormRow>
            <ActionBtn>
              <BooksBall s={33} />
              <span dir="rtl">إنشاء القيد الختامي + إنشاء القيد الافتتاحي للسنه الماليه الجديده</span>
            </ActionBtn>
            <NextHint>To continue, click Next</NextHint>
          </WizardPage>
        </DialogBody>
        <DialogFooter>
          <WizBtn $off>&lt; Back</WizBtn>
          <WizBtn $primary $gap={4}>Next &gt;</WizBtn>
          <WizBtn $gap={11}>Cancel</WizBtn>
          <Grip width="12" height="12" viewBox="0 0 12 12">
            <path d="M10 2h1v1h-1zM7 5h1v1H7zM10 5h1v1h-1zM4 8h1v1H4zM7 8h1v1H7zM10 8h1v1h-1z" fill="#8a9ab0" />
          </Grip>
        </DialogFooter>
      </Dialog>
    </Page>
  );
}
